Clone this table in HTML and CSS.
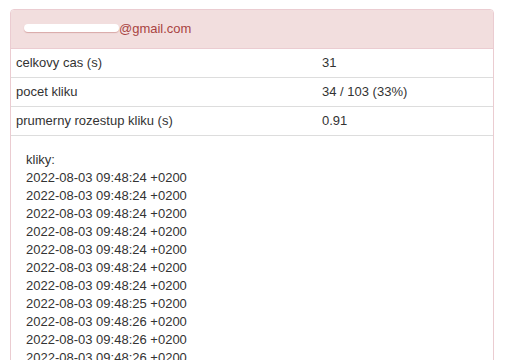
FILE: index.html
```html
<!DOCTYPE html>
<html>
<head>
<meta charset="utf-8">
<link rel="stylesheet" href="styles.css">
</head>
<body>
<div class="panel">
  <div class="panel-heading"><span class="redact"></span>@gmail.com</div>
  <table class="stats">
    <tr><td class="label">celkovy cas (s)</td><td>31</td></tr>
    <tr><td class="label">pocet kliku</td><td>34 / 103 (33%)</td></tr>
    <tr><td class="label">prumerny rozestup kliku (s)</td><td>0.91</td></tr>
  </table>
  <div class="panel-body">
    <div>kliky:</div>
    <div>2022-08-03 09:48:24 +0200</div>
    <div>2022-08-03 09:48:24 +0200</div>
    <div>2022-08-03 09:48:24 +0200</div>
    <div>2022-08-03 09:48:24 +0200</div>
    <div>2022-08-03 09:48:24 +0200</div>
    <div>2022-08-03 09:48:24 +0200</div>
    <div>2022-08-03 09:48:24 +0200</div>
    <div>2022-08-03 09:48:25 +0200</div>
    <div>2022-08-03 09:48:26 +0200</div>
    <div>2022-08-03 09:48:26 +0200</div>
    <div>2022-08-03 09:48:26 +0200</div>
    <div>2022-08-03 09:48:26 +0200</div>
    <div>2022-08-03 09:48:27 +0200</div>
  </div>
</div>
</body>
</html>
```
FILE: styles.css
```css
html, body {
  margin: 0;
  padding: 0;
  background: #fff;
}
body {
  font-family: "Liberation Sans", Arial, Helvetica, sans-serif;
  font-size: 13px;
  line-height: 18px;
  color: #333;
  padding: 9px 11px 0 10px;
}
.panel {
  border: 1px solid #ebccd1;
  border-radius: 4px;
  background: #fff;
}
.panel-heading {
  background: #f2dede;
  color: #a94442;
  padding: 10px 15px 10px 13px;
  border-bottom: 1px solid #ebccd1;
  border-radius: 3px 3px 0 0;
}
.redact {
  display: inline-block;
  width: 95px;
  height: 8px;
  background: #fff;
  border-radius: 4px;
  vertical-align: 1px;
  box-shadow: 0 1px 1px rgba(169, 68, 66, 0.35);
}
.stats {
  width: 100%;
  border-collapse: collapse;
  table-layout: fixed;
}
.stats td {
  padding: 5px 5px;
  border-bottom: 1px solid #ddd;
  vertical-align: top;
}
.stats td.label {
  width: 296px;
}
.panel-body {
  padding: 15px 15px;
}
```
